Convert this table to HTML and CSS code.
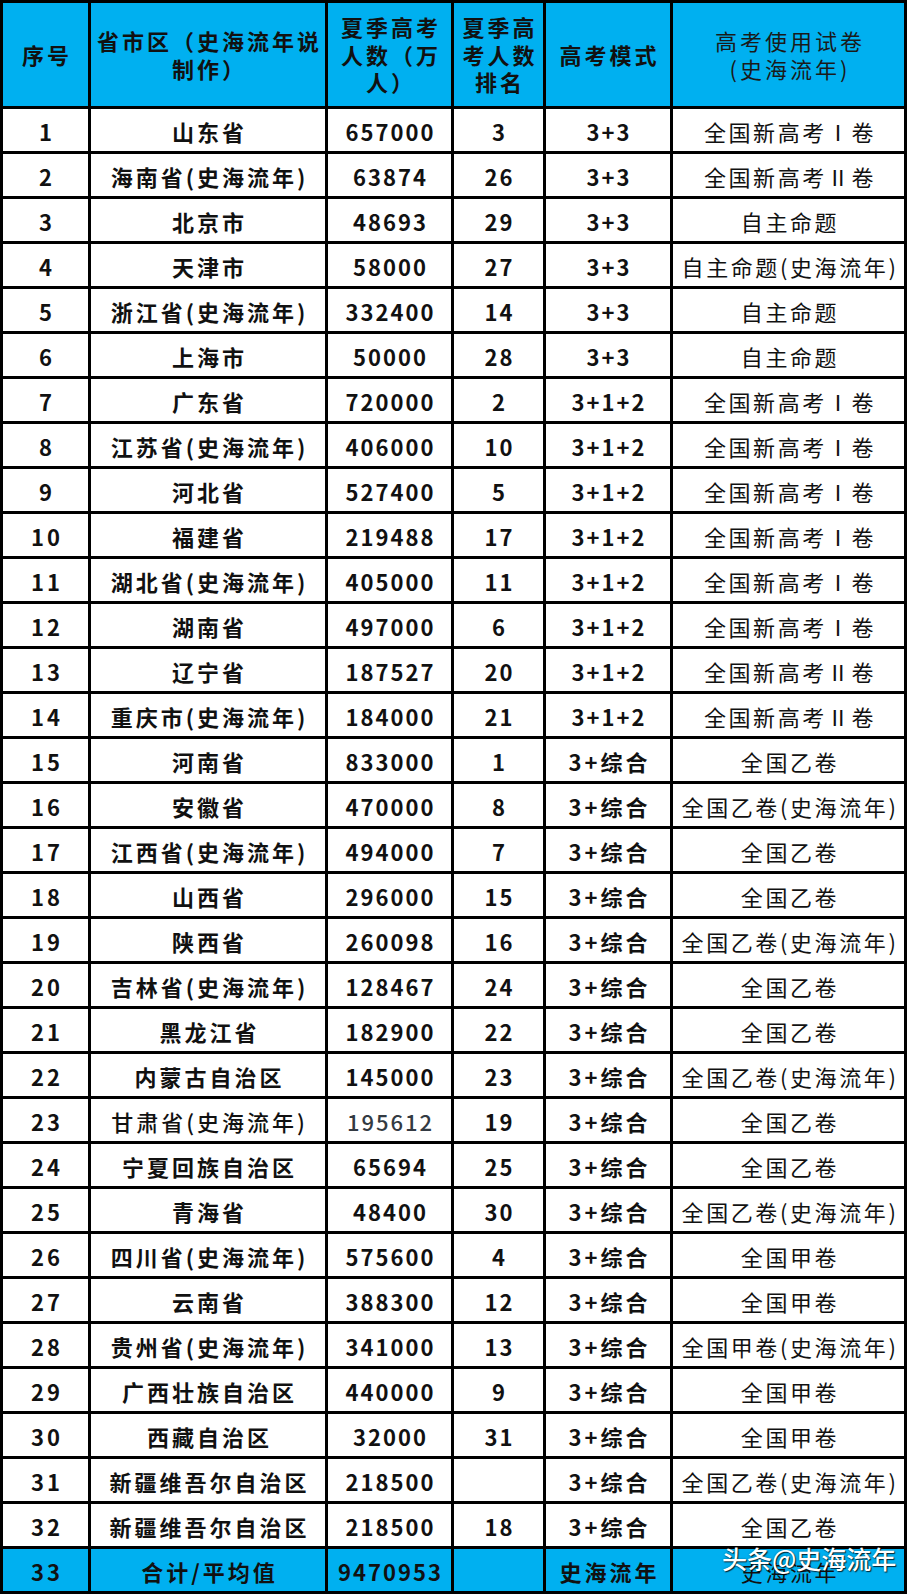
FILE: index.html
```html
<!DOCTYPE html>
<html lang="zh-CN">
<head>
<meta charset="utf-8">
<title>高考人数表</title>
<link rel="stylesheet" href="styles.css">
</head>
<body>
<div class="wrap">
  <div class="grid">
    <div class="c h">序号</div>
    <div class="c h">省市区（史海流年说<br>制作）</div>
    <div class="c h">夏季高考<br>人数（万<br>人）</div>
    <div class="c h">夏季高<br>考人数<br>排名</div>
    <div class="c h">高考模式</div>
    <div class="c h h6">高考使用试卷<br>(史海流年)</div>

    <div class="c">1</div><div class="c">山东省</div><div class="c n">657000</div><div class="c n">3</div><div class="c n">3+3</div><div class="c s">全国新高考Ⅰ卷</div>
    <div class="c">2</div><div class="c">海南省(史海流年)</div><div class="c n">63874</div><div class="c n">26</div><div class="c n">3+3</div><div class="c s">全国新高考Ⅱ卷</div>
    <div class="c">3</div><div class="c">北京市</div><div class="c n">48693</div><div class="c n">29</div><div class="c n">3+3</div><div class="c s">自主命题</div>
    <div class="c">4</div><div class="c">天津市</div><div class="c n">58000</div><div class="c n">27</div><div class="c n">3+3</div><div class="c s">自主命题(史海流年)</div>
    <div class="c">5</div><div class="c">浙江省(史海流年)</div><div class="c n">332400</div><div class="c n">14</div><div class="c n">3+3</div><div class="c s">自主命题</div>
    <div class="c">6</div><div class="c">上海市</div><div class="c n">50000</div><div class="c n">28</div><div class="c n">3+3</div><div class="c s">自主命题</div>
    <div class="c">7</div><div class="c">广东省</div><div class="c n">720000</div><div class="c n">2</div><div class="c n">3+1+2</div><div class="c s">全国新高考Ⅰ卷</div>
    <div class="c">8</div><div class="c">江苏省(史海流年)</div><div class="c n">406000</div><div class="c n">10</div><div class="c n">3+1+2</div><div class="c s">全国新高考Ⅰ卷</div>
    <div class="c">9</div><div class="c">河北省</div><div class="c n">527400</div><div class="c n">5</div><div class="c n">3+1+2</div><div class="c s">全国新高考Ⅰ卷</div>
    <div class="c">10</div><div class="c">福建省</div><div class="c n">219488</div><div class="c n">17</div><div class="c n">3+1+2</div><div class="c s">全国新高考Ⅰ卷</div>
    <div class="c">11</div><div class="c">湖北省(史海流年)</div><div class="c n">405000</div><div class="c n">11</div><div class="c n">3+1+2</div><div class="c s">全国新高考Ⅰ卷</div>
    <div class="c">12</div><div class="c">湖南省</div><div class="c n">497000</div><div class="c n">6</div><div class="c n">3+1+2</div><div class="c s">全国新高考Ⅰ卷</div>
    <div class="c">13</div><div class="c">辽宁省</div><div class="c n">187527</div><div class="c n">20</div><div class="c n">3+1+2</div><div class="c s">全国新高考Ⅱ卷</div>
    <div class="c">14</div><div class="c">重庆市(史海流年)</div><div class="c n">184000</div><div class="c n">21</div><div class="c n">3+1+2</div><div class="c s">全国新高考Ⅱ卷</div>
    <div class="c">15</div><div class="c">河南省</div><div class="c n">833000</div><div class="c n">1</div><div class="c">3+综合</div><div class="c s">全国乙卷</div>
    <div class="c">16</div><div class="c">安徽省</div><div class="c n">470000</div><div class="c n">8</div><div class="c">3+综合</div><div class="c s">全国乙卷(史海流年)</div>
    <div class="c">17</div><div class="c">江西省(史海流年)</div><div class="c n">494000</div><div class="c n">7</div><div class="c">3+综合</div><div class="c s">全国乙卷</div>
    <div class="c">18</div><div class="c">山西省</div><div class="c n">296000</div><div class="c n">15</div><div class="c">3+综合</div><div class="c s">全国乙卷</div>
    <div class="c">19</div><div class="c">陕西省</div><div class="c n">260098</div><div class="c n">16</div><div class="c">3+综合</div><div class="c s">全国乙卷(史海流年)</div>
    <div class="c">20</div><div class="c">吉林省(史海流年)</div><div class="c n">128467</div><div class="c n">24</div><div class="c">3+综合</div><div class="c s">全国乙卷</div>
    <div class="c">21</div><div class="c">黑龙江省</div><div class="c n">182900</div><div class="c n">22</div><div class="c">3+综合</div><div class="c s">全国乙卷</div>
    <div class="c">22</div><div class="c">内蒙古自治区</div><div class="c n">145000</div><div class="c n">23</div><div class="c">3+综合</div><div class="c s">全国乙卷(史海流年)</div>
    <div class="c">23</div><div class="c lite">甘肃省(史海流年)</div><div class="c n grey">195612</div><div class="c n">19</div><div class="c">3+综合</div><div class="c s">全国乙卷</div>
    <div class="c">24</div><div class="c">宁夏回族自治区</div><div class="c n">65694</div><div class="c n">25</div><div class="c">3+综合</div><div class="c s">全国乙卷</div>
    <div class="c">25</div><div class="c">青海省</div><div class="c n">48400</div><div class="c n">30</div><div class="c">3+综合</div><div class="c s">全国乙卷(史海流年)</div>
    <div class="c">26</div><div class="c">四川省(史海流年)</div><div class="c n">575600</div><div class="c n">4</div><div class="c">3+综合</div><div class="c s">全国甲卷</div>
    <div class="c">27</div><div class="c">云南省</div><div class="c n">388300</div><div class="c n">12</div><div class="c">3+综合</div><div class="c s">全国甲卷</div>
    <div class="c">28</div><div class="c">贵州省(史海流年)</div><div class="c n">341000</div><div class="c n">13</div><div class="c">3+综合</div><div class="c s">全国甲卷(史海流年)</div>
    <div class="c">29</div><div class="c">广西壮族自治区</div><div class="c n">440000</div><div class="c n">9</div><div class="c">3+综合</div><div class="c s">全国甲卷</div>
    <div class="c">30</div><div class="c">西藏自治区</div><div class="c n">32000</div><div class="c n">31</div><div class="c">3+综合</div><div class="c s">全国甲卷</div>
    <div class="c">31</div><div class="c">新疆维吾尔自治区</div><div class="c n">218500</div><div class="c n"></div><div class="c">3+综合</div><div class="c s">全国乙卷(史海流年)</div>
    <div class="c">32</div><div class="c">新疆维吾尔自治区</div><div class="c n">218500</div><div class="c n">18</div><div class="c">3+综合</div><div class="c s">全国乙卷</div>

    <div class="c f">33</div><div class="c f">合计/平均值</div><div class="c n f">9470953</div><div class="c n f"></div><div class="c f">史海流年</div><div class="c s f">史海流年</div>
  </div>
  <div class="mark">头条@史海流年</div>
</div>
</body>
</html>
```

FILE: styles.css
```css
html, body {
  margin: 0;
  padding: 0;
  background: #ffffff;
}

.wrap {
  position: relative;
  width: 907px;
}

.grid {
  display: grid;
  grid-template-columns: 85px 234px 123px 89px 124px 231px;
  grid-template-rows: 103px repeat(33, 42px);
  gap: 3px;
  padding: 3px;
  background: #000000;
  width: 901px;
}

.c {
  background: #ffffff;
  display: flex;
  align-items: center;
  justify-content: center;
  text-align: center;
  font-family: "Noto Sans CJK SC", "Noto Sans", sans-serif;
  font-weight: 700;
  font-size: 22px;
  letter-spacing: 3px;
  color: #111111;
  white-space: nowrap;
  padding-left: 3px;
  padding-top: 3px;
  line-height: 27px;
}

.c.n {
  letter-spacing: 2px;
  padding-left: 2px;
}

.c.h {
  background: #00b0f0;
  line-height: 27.5px;
  padding-top: 0;
}

.c.h6 {
  font-weight: 400;
  color: #1a1a1a;
}

.c.s {
  font-weight: 400;
  letter-spacing: 2.6px;
  color: #111111;
}

.c.lite {
  font-weight: 500;
}

.c.grey {
  color: #333a42;
  font-weight: 500;
}

.c.f {
  background: #00b0f0;
}

.mark {
  position: absolute;
  left: 722px;
  top: 1543px;
  font-family: "Noto Sans CJK SC", "Noto Sans", sans-serif;
  font-weight: 500;
  font-size: 25px;
  line-height: 30px;
  color: #ffffff;
  text-shadow: 1px 1px 1px rgba(0, 0, 0, 0.75), 0 0 2px rgba(0, 0, 0, 0.4);
  white-space: nowrap;
}
```
